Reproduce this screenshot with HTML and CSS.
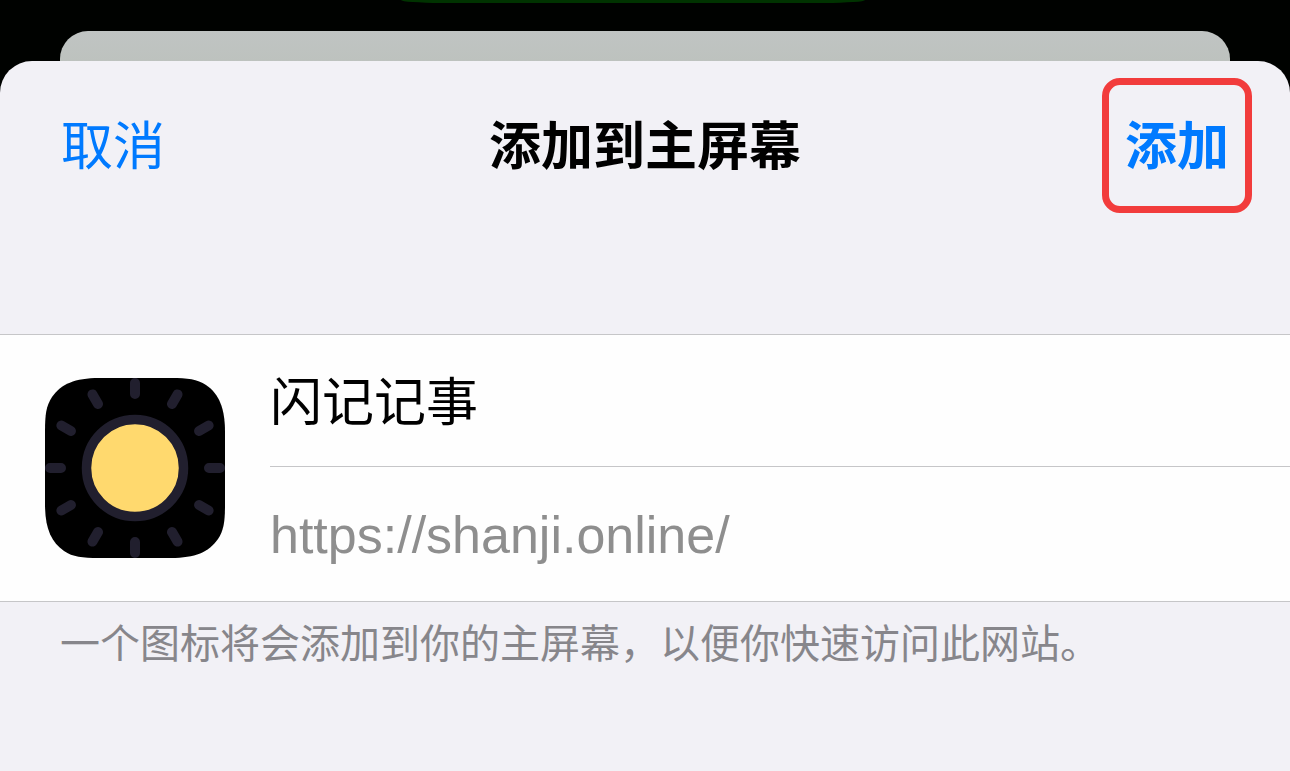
FILE: index.html
```html
<!DOCTYPE html>
<html lang="zh-CN">
<head>
  <meta charset="UTF-8">
  <meta name="viewport" content="width=device-width, initial-scale=1">
  <title>添加到主屏幕</title>
  <link rel="stylesheet" href="styles.css">
</head>
<body>

  <div class="status-pill"></div>
  <div class="back-sheet"></div>

  <main class="sheet">
    <header class="nav">
      <button type="button" class="nav-btn cancel">取消</button>
      <h1>添加到主屏幕</h1>
      <button type="button" class="nav-btn add">添加</button>
    </header>

    <form class="site">
      <svg class="app-icon" viewBox="0 0 180 180" aria-hidden="true">
        <defs>
          <clipPath id="iconShape">
            <path d="M54 0H126C143 0 152 1 161 7C174 16 180 30 180 54V126C180 143 179 152 173 161C164 174 150 180 126 180H54C37 180 28 179 19 173C6 164 0 150 0 126V54C0 37 1 28 7 19C16 6 30 0 54 0Z"/>
          </clipPath>
        </defs>
        <g clip-path="url(#iconShape)">
          <rect width="180" height="180" fill="#000"/>
          <g stroke="#211f2e" stroke-width="10" stroke-linecap="round">
            <path id="rays" d="M90 5V16M90 164V175M5 90H16M164 90H175"/>
            <use href="#rays" transform="rotate(30 90 90)"/>
            <use href="#rays" transform="rotate(60 90 90)"/>
          </g>
          <circle cx="90" cy="90" r="48.5" fill="#ffd96e" stroke="#211f2e" stroke-width="9.5"/>
        </g>
      </svg>
      <div class="fields">
        <input type="text" class="site-name" aria-label="名称" value="闪记记事">
        <p class="site-url">https://shanji.online/</p>
      </div>
    </form>

    <p class="hint">一个图标将会添加到你的主屏幕，以便你快速访问此网站。</p>
  </main>

</body>
</html>
```
FILE: styles.css
```css
* {
  box-sizing: border-box;
}

body {
  margin: 0;
  min-height: 100vh;
  display: flex;
  flex-direction: column;
  background: #000200;
  font-family: "Liberation Sans", "Noto Sans CJK SC", sans-serif;
}

.status-pill {
  width: 36%;
  height: 3px;
  margin: 0 auto 28px;
  transform: translateX(-12px);
  border-radius: 0 0 40px 40px / 0 0 3px 3px;
  background: #003300;
}

.back-sheet {
  height: 30px;
  margin: 0 60px;
  border-radius: 28px 28px 0 0;
  background: linear-gradient(#c0c4c3, #bdc2be);
}

.sheet {
  flex: 1;
  border-radius: 32px 32px 0 0;
  background: #f2f1f6;
}

.nav {
  display: grid;
  grid-template-columns: 1fr auto 1fr;
  align-items: center;
  padding: 17px 38px 0;
  margin-bottom: 121px;
}

.nav h1 {
  margin: 0;
  padding-top: 4px;
  font-size: 52px;
  font-weight: 600;
  line-height: 73px;
  color: #000;
}

.nav-btn {
  padding: 26px 16px 22px;
  border: 7px solid transparent;
  border-radius: 18px;
  background: none;
  font-family: inherit;
  font-size: 52px;
  line-height: 73px;
  color: #007aff;
  cursor: pointer;
}

.cancel {
  justify-self: start;
}

.add {
  justify-self: end;
  border-color: #f23c3c;
  font-weight: 600;
}

.site {
  display: flex;
  align-items: center;
  padding-left: 45px;
  border-top: 1px solid #c6c6c8;
  border-bottom: 1px solid #c6c6c8;
  background: #fefefe;
}

.app-icon {
  flex: none;
  width: 180px;
  height: 180px;
}

.fields {
  flex: 1;
  min-width: 0;
  margin-left: 45px;
}

.site-name {
  display: block;
  width: 100%;
  height: 132px;
  padding: 0 0 4px;
  border: 0;
  border-bottom: 1px solid #c6c6c8;
  background: none;
  font-family: inherit;
  font-size: 52px;
  color: #000;
  outline: none;
}

.site-url {
  margin: 0;
  padding-top: 2px;
  font-size: 52px;
  line-height: 132px;
  color: #8e8e8e;
}

.hint {
  margin: 0;
  padding: 12px 60px;
  font-size: 40px;
  line-height: 60px;
  color: #87868b;
}
```
